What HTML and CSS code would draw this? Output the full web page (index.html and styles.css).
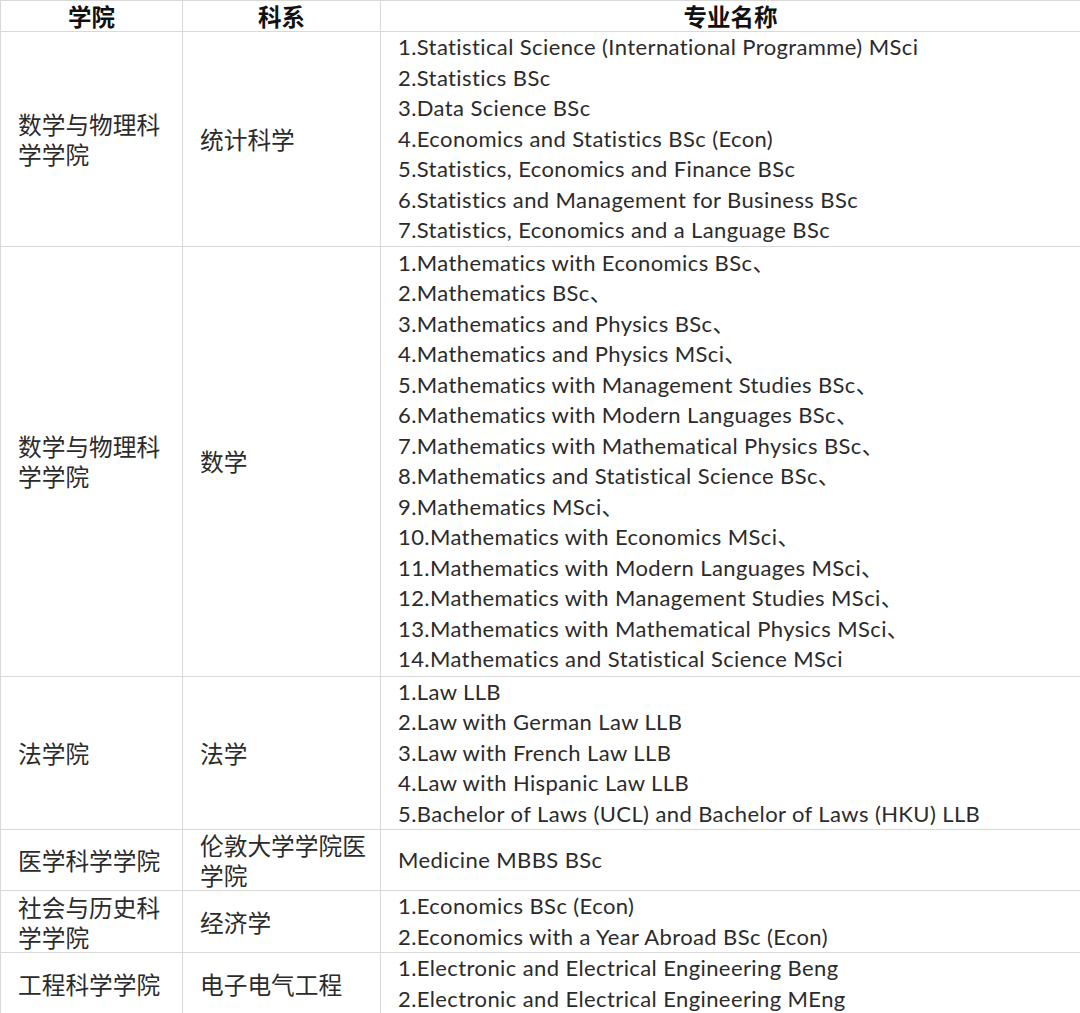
FILE: index.html
```html
<!DOCTYPE html>
<html lang="zh-CN">
<head>
<meta charset="utf-8">
<link rel="stylesheet" href="styles.css">
</head>
<body>
<table class="grid">
  <colgroup>
    <col class="c1"><col class="c2"><col class="c3">
  </colgroup>
  <thead>
    <tr class="head"><th>学院</th><th>科系</th><th>专业名称</th></tr>
  </thead>
  <tbody>
    <tr class="r1">
      <td class="cn">数学与物理科学学院</td>
      <td class="cn">统计科学</td>
      <td class="en">1.Statistical Science (International Programme) MSci<br>2.Statistics BSc<br>3.Data Science BSc<br>4.Economics and Statistics BSc (Econ)<br>5.Statistics, Economics and Finance BSc<br>6.Statistics and Management for Business BSc<br>7.Statistics, Economics and a Language BSc</td>
    </tr>
    <tr class="r2">
      <td class="cn">数学与物理科学学院</td>
      <td class="cn">数学</td>
      <td class="en">1.Mathematics with Economics BSc、<br>2.Mathematics BSc、<br>3.Mathematics and Physics BSc、<br>4.Mathematics and Physics MSci、<br>5.Mathematics with Management Studies BSc、<br>6.Mathematics with Modern Languages BSc、<br>7.Mathematics with Mathematical Physics BSc、<br>8.Mathematics and Statistical Science BSc、<br>9.Mathematics MSci、<br>10.Mathematics with Economics MSci、<br>11.Mathematics with Modern Languages MSci、<br>12.Mathematics with Management Studies MSci、<br>13.Mathematics with Mathematical Physics MSci、<br>14.Mathematics and Statistical Science MSci</td>
    </tr>
    <tr class="r3">
      <td class="cn">法学院</td>
      <td class="cn">法学</td>
      <td class="en">1.Law LLB<br>2.Law with German Law LLB<br>3.Law with French Law LLB<br>4.Law with Hispanic Law LLB<br>5.Bachelor of Laws (UCL) and Bachelor of Laws (HKU) LLB</td>
    </tr>
    <tr class="r4">
      <td class="cn">医学科学学院</td>
      <td class="cn">伦敦大学学院医学院</td>
      <td class="en">Medicine MBBS BSc</td>
    </tr>
    <tr class="r5">
      <td class="cn">社会与历史科学学院</td>
      <td class="cn">经济学</td>
      <td class="en">1.Economics BSc (Econ)<br>2.Economics with a Year Abroad BSc (Econ)</td>
    </tr>
    <tr class="r6">
      <td class="cn">工程科学学院</td>
      <td class="cn">电子电气工程</td>
      <td class="en">1.Electronic and Electrical Engineering Beng<br>2.Electronic and Electrical Engineering MEng</td>
    </tr>
  </tbody>
</table>
</body>
</html>
```

FILE: styles.css
```css
html, body {
  margin: 0;
  padding: 0;
  background: #ffffff;
}

.grid {
  border-collapse: collapse;
  table-layout: fixed;
  width: 1080px;
  color: #2b2b2b;
}

.c1 { width: 182px; }
.c2 { width: 198px; }
.c3 { width: 700px; }

.grid th,
.grid td {
  border: 1px solid #d9d9d9;
  padding: 0 0 0 17px;
  vertical-align: middle;
  text-align: left;
}

.grid th {
  height: 30px;
  padding: 0;
  text-align: center;
  font-family: "Noto Sans CJK SC", sans-serif;
  font-weight: 700;
  font-size: 23.5px;
  line-height: 30px;
  color: #111;
}

.cn {
  font-family: "Noto Sans CJK SC", sans-serif;
  font-size: 23.7px;
  line-height: 30px;
  word-break: break-all;
}

.en {
  font-family: Lato, "Noto Sans CJK SC", sans-serif;
  font-size: 22px;
  letter-spacing: 0.4px;
  line-height: 30.5px;
  white-space: nowrap;
}

.r1 td { height: 213px; }
.r2 td { height: 429px; }
.r3 td { height: 152px; }
.r4 td { height: 60px; }
.r5 td { height: 61px; }
.r6 td { height: 60px; }
```
